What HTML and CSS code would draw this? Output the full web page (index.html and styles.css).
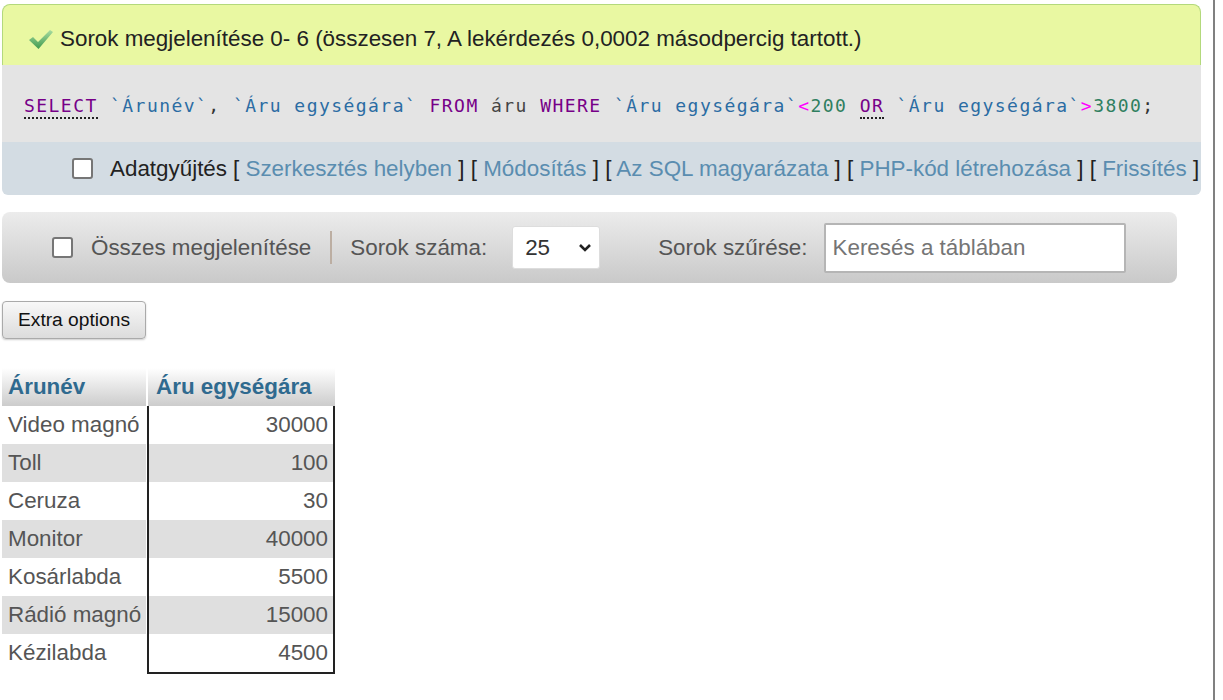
FILE: index.html
```html
<!DOCTYPE html>
<html lang="hu">
<head>
<meta charset="utf-8">
<title>Sorok</title>
<link rel="stylesheet" href="styles.css">
</head>
<body>
<main class="page">
  <section class="result">
    <div class="success">
      <svg class="check" width="26" height="24" viewBox="0 0 26 24"><defs><linearGradient id="g" x1="0" y1="0" x2="0" y2="1"><stop offset="0" stop-color="#a8dca0"/><stop offset="1" stop-color="#3f9a4e"/></linearGradient></defs><path d="M1 13 L5 10 L10 15 L22 3 L25 5 L10.5 22 Z" fill="url(#g)"/></svg>
      <span>Sorok megjelenítése 0- 6 (összesen 7, A lekérdezés 0,0002 másodpercig tartott.)</span>
    </div>
    <div class="sql"><code><span class="kw dotted">SELECT</span> <span class="id">`Árunév`</span>, <span class="id">`Áru egységára`</span> <span class="kw">FROM</span> <span class="plain">áru</span> <span class="kw">WHERE</span> <span class="id">`Áru egységára`</span><span class="op">&lt;</span><span class="num">200</span> <span class="kw dotted">OR</span> <span class="id">`Áru egységára`</span><span class="op">&gt;</span><span class="num">3800</span>;</code></div>
    <div class="tools">
      <input class="box" type="checkbox">
      <span class="profile">Adatgyűjtés</span>
      <span class="links">[ <a>Szerkesztés helyben</a> ] [ <a>Módosítás</a> ] [ <a>Az SQL magyarázata</a> ] [ <a>PHP-kód létrehozása</a> ] [ <a>Frissítés</a> ]</span>
    </div>
  </section>
  <section class="navbar">
    <input class="box" type="checkbox">
    <span class="showall">Összes megjelenítése</span>
    <span class="sep"></span>
    <span class="rows-label">Sorok száma:</span>
    <span class="selectwrap">
      <select class="rows"><option>25</option></select>
      <svg class="chevron" width="14" height="10" viewBox="0 0 14 10"><path d="M2 2 L7 7 L12 2" fill="none" stroke="#222" stroke-width="2.6"/></svg>
    </span>
    <span class="filter-label">Sorok szűrése:</span>
    <input class="filter" type="text" placeholder="Keresés a táblában">
  </section>
  <button class="extra" type="button">Extra options</button>
  <div class="tablewrap">
    <div class="frame"></div>
    <table class="data">
      <thead><tr><th>Árunév</th><th>Áru egységára</th></tr></thead>
      <tbody>
        <tr><td>Video magnó</td><td class="n">30000</td></tr>
        <tr><td>Toll</td><td class="n">100</td></tr>
        <tr><td>Ceruza</td><td class="n">30</td></tr>
        <tr><td>Monitor</td><td class="n">40000</td></tr>
        <tr><td>Kosárlabda</td><td class="n">5500</td></tr>
        <tr><td>Rádió magnó</td><td class="n">15000</td></tr>
        <tr><td>Kézilabda</td><td class="n">4500</td></tr>
      </tbody>
    </table>
  </div>
</main>
</body>
</html>
```
FILE: styles.css
```css
html, body { margin: 0; padding: 0; background: #fff; }
body { font-family: "Liberation Sans", Arial, sans-serif; font-size: 22.4px; color: #444; overflow: hidden; }
.page { box-sizing: border-box; width: 1215px; height: 700px; border-right: 2px solid #808080; padding: 4px 0 0 2px; }
.result { width: 1199px; }
.success { box-sizing: border-box; height: 61px; display: flex; align-items: center; padding: 8px 0 0 25px; gap: 6px; background: #e9f8a2; border: 1px solid #b3d97c; border-bottom: 0; border-radius: 8px 8px 0 0; color: #222; white-space: nowrap; }
.check { flex: none; }
.sql { box-sizing: border-box; height: 77px; padding: 27px 0 0 22px; background: #e4e4e4; white-space: pre; }
.sql code { font-family: "DejaVu Sans Mono", monospace; font-size: 18px; letter-spacing: 1.45px; color: #333; }
.kw { color: #770088; }
.dotted { border-bottom: 2px dotted #222; padding-bottom: 1px; }
.id { color: #2b6ca3; }
.plain { color: #444; }
.op { color: #f0f; }
.num { color: #2f7f5f; }
.tools { box-sizing: border-box; height: 53px; display: flex; align-items: center; padding-left: 70px; background: #d3dce3; border-radius: 0 0 6px 6px; white-space: nowrap; color: #222; }
.box { appearance: none; flex: none; box-sizing: border-box; width: 21px; height: 21px; margin: 0; background: #fff; border: 2px solid #767676; border-radius: 3px; }
.profile { margin-left: 17px; }
.links { margin-left: 6px; }
.links a { color: #5a8db0; }
.navbar { box-sizing: border-box; width: 1175px; height: 71px; margin-top: 17px; display: flex; align-items: center; padding-left: 50px; color: #555; background: linear-gradient(#ececec, #c9c9c9); border-radius: 8px; white-space: nowrap; }
.showall { margin-left: 18px; }
.sep { width: 2px; height: 33px; margin: 0 18px 0 19px; background: #bcaea2; }
.selectwrap { position: relative; display: block; width: 88px; height: 43px; margin-left: 25px; }
.rows { appearance: none; box-sizing: border-box; display: block; width: 88px; height: 43px; padding-left: 12px; font: 22.4px "Liberation Sans", Arial, sans-serif; color: #333; background: #fff; border: 1px solid #ddd; border-radius: 3px; }
.chevron { position: absolute; right: 8px; top: 17px; }
.filter-label { margin-left: 58px; }
.filter { box-sizing: border-box; width: 302px; height: 50px; margin-left: 16px; padding: 0 7px; font: 22.4px "Liberation Sans", Arial, sans-serif; background: #fff; border: 2px solid #b5b5b5; border-radius: 2px; }
.filter::placeholder { color: #757575; }
.extra { display: block; box-sizing: border-box; width: 144px; height: 38px; margin-top: 18px; padding: 0; font: 19.2px "Liberation Sans", Arial, sans-serif; color: #111; background: linear-gradient(#f8f8f8, #dcdcdc); border: 1px solid #aaa; border-radius: 4px; box-shadow: 0 1px 2px #ccc; }
.tablewrap { position: relative; width: 333px; margin-top: 29px; }
.frame { position: absolute; left: 145px; top: 38px; width: 188px; height: 268px; box-sizing: border-box; border: 2px solid #222; border-top: 0; pointer-events: none; }
.data { border-collapse: separate; border-spacing: 0; width: 333px; table-layout: fixed; white-space: nowrap; }
.data th { box-sizing: border-box; height: 38px; padding: 0 6px; text-align: left; font-weight: bold; color: #2f6a8f; background: linear-gradient(#fff, #ccc); }
.data th:first-child, .data td:first-child { width: 146px; border-right: 2px solid #fff; }
.data th + th { padding-left: 8px; }
.data td { box-sizing: border-box; height: 38px; padding: 0 6px; background: #fff; color: #555; }
.data tbody tr:nth-child(even) td { background: #dfdfdf; }
.data td.n { text-align: right; padding-right: 7px; }
```
